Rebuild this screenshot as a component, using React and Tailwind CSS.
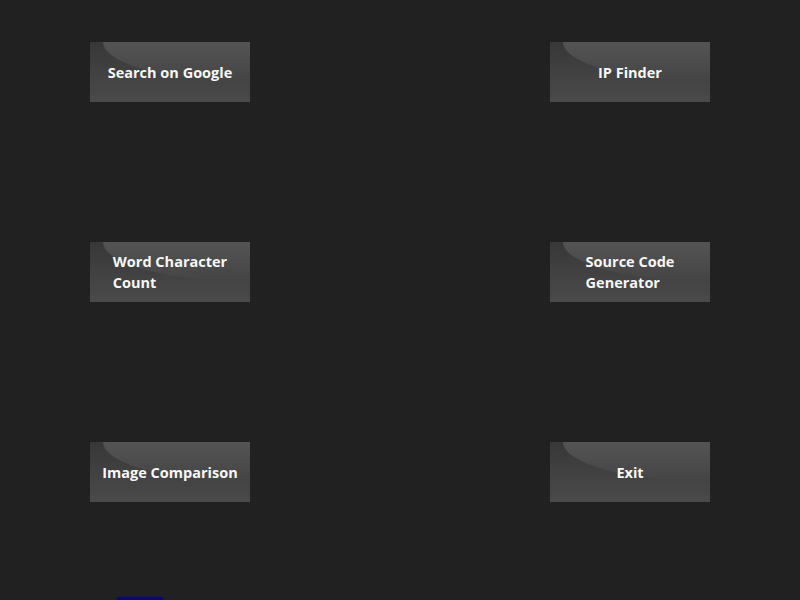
const rows = [
  [["Search on Google"], ["IP Finder"]],
  [["Word Character", "Count"], ["Source Code", "Generator"]],
  [["Image Comparison"], ["Exit"]],
];

function Tile({ lines }) {
  return (
    <button
      type="button"
      className="relative flex h-[60px] w-[160px] items-center justify-center overflow-hidden bg-gradient-to-b from-[#383838] to-[#4a4a4a] px-[6px]"
    >
      <span className="pointer-events-none absolute left-[13px] top-[-40px] h-[80px] w-[300px] rounded-[50%] bg-gradient-to-b from-[#5e5e5e] via-[#545454] to-[#444444]" />
      <span className="relative flex flex-col whitespace-nowrap text-left text-[14.5px] font-bold leading-[21px] text-[#f7f7f7] [font-family:'Open_Sans',sans-serif]">
        {lines.map((line) => (
          <span key={line}>{line}</span>
        ))}
      </span>
    </button>
  );
}

export default function App() {
  return (
    <div className="h-[600px] w-[800px] overflow-hidden bg-[#212121]">
      <div className="flex flex-col gap-[140px] px-[90px] pt-[42px]">
        {rows.map(([left, right]) => (
          <div key={left[0]} className="flex justify-between">
            <Tile lines={left} />
            <Tile lines={right} />
          </div>
        ))}
      </div>
      <div className="mt-[95px] flex gap-[6px] pl-[50px] text-[16px] leading-[20px] [font-family:'Liberation_Sans',sans-serif]">
        <span className="text-black">Made by</span>
        <a className="bg-[#0a0a6e] text-[#3030c0]">Admin</a>
      </div>
    </div>
  );
}
